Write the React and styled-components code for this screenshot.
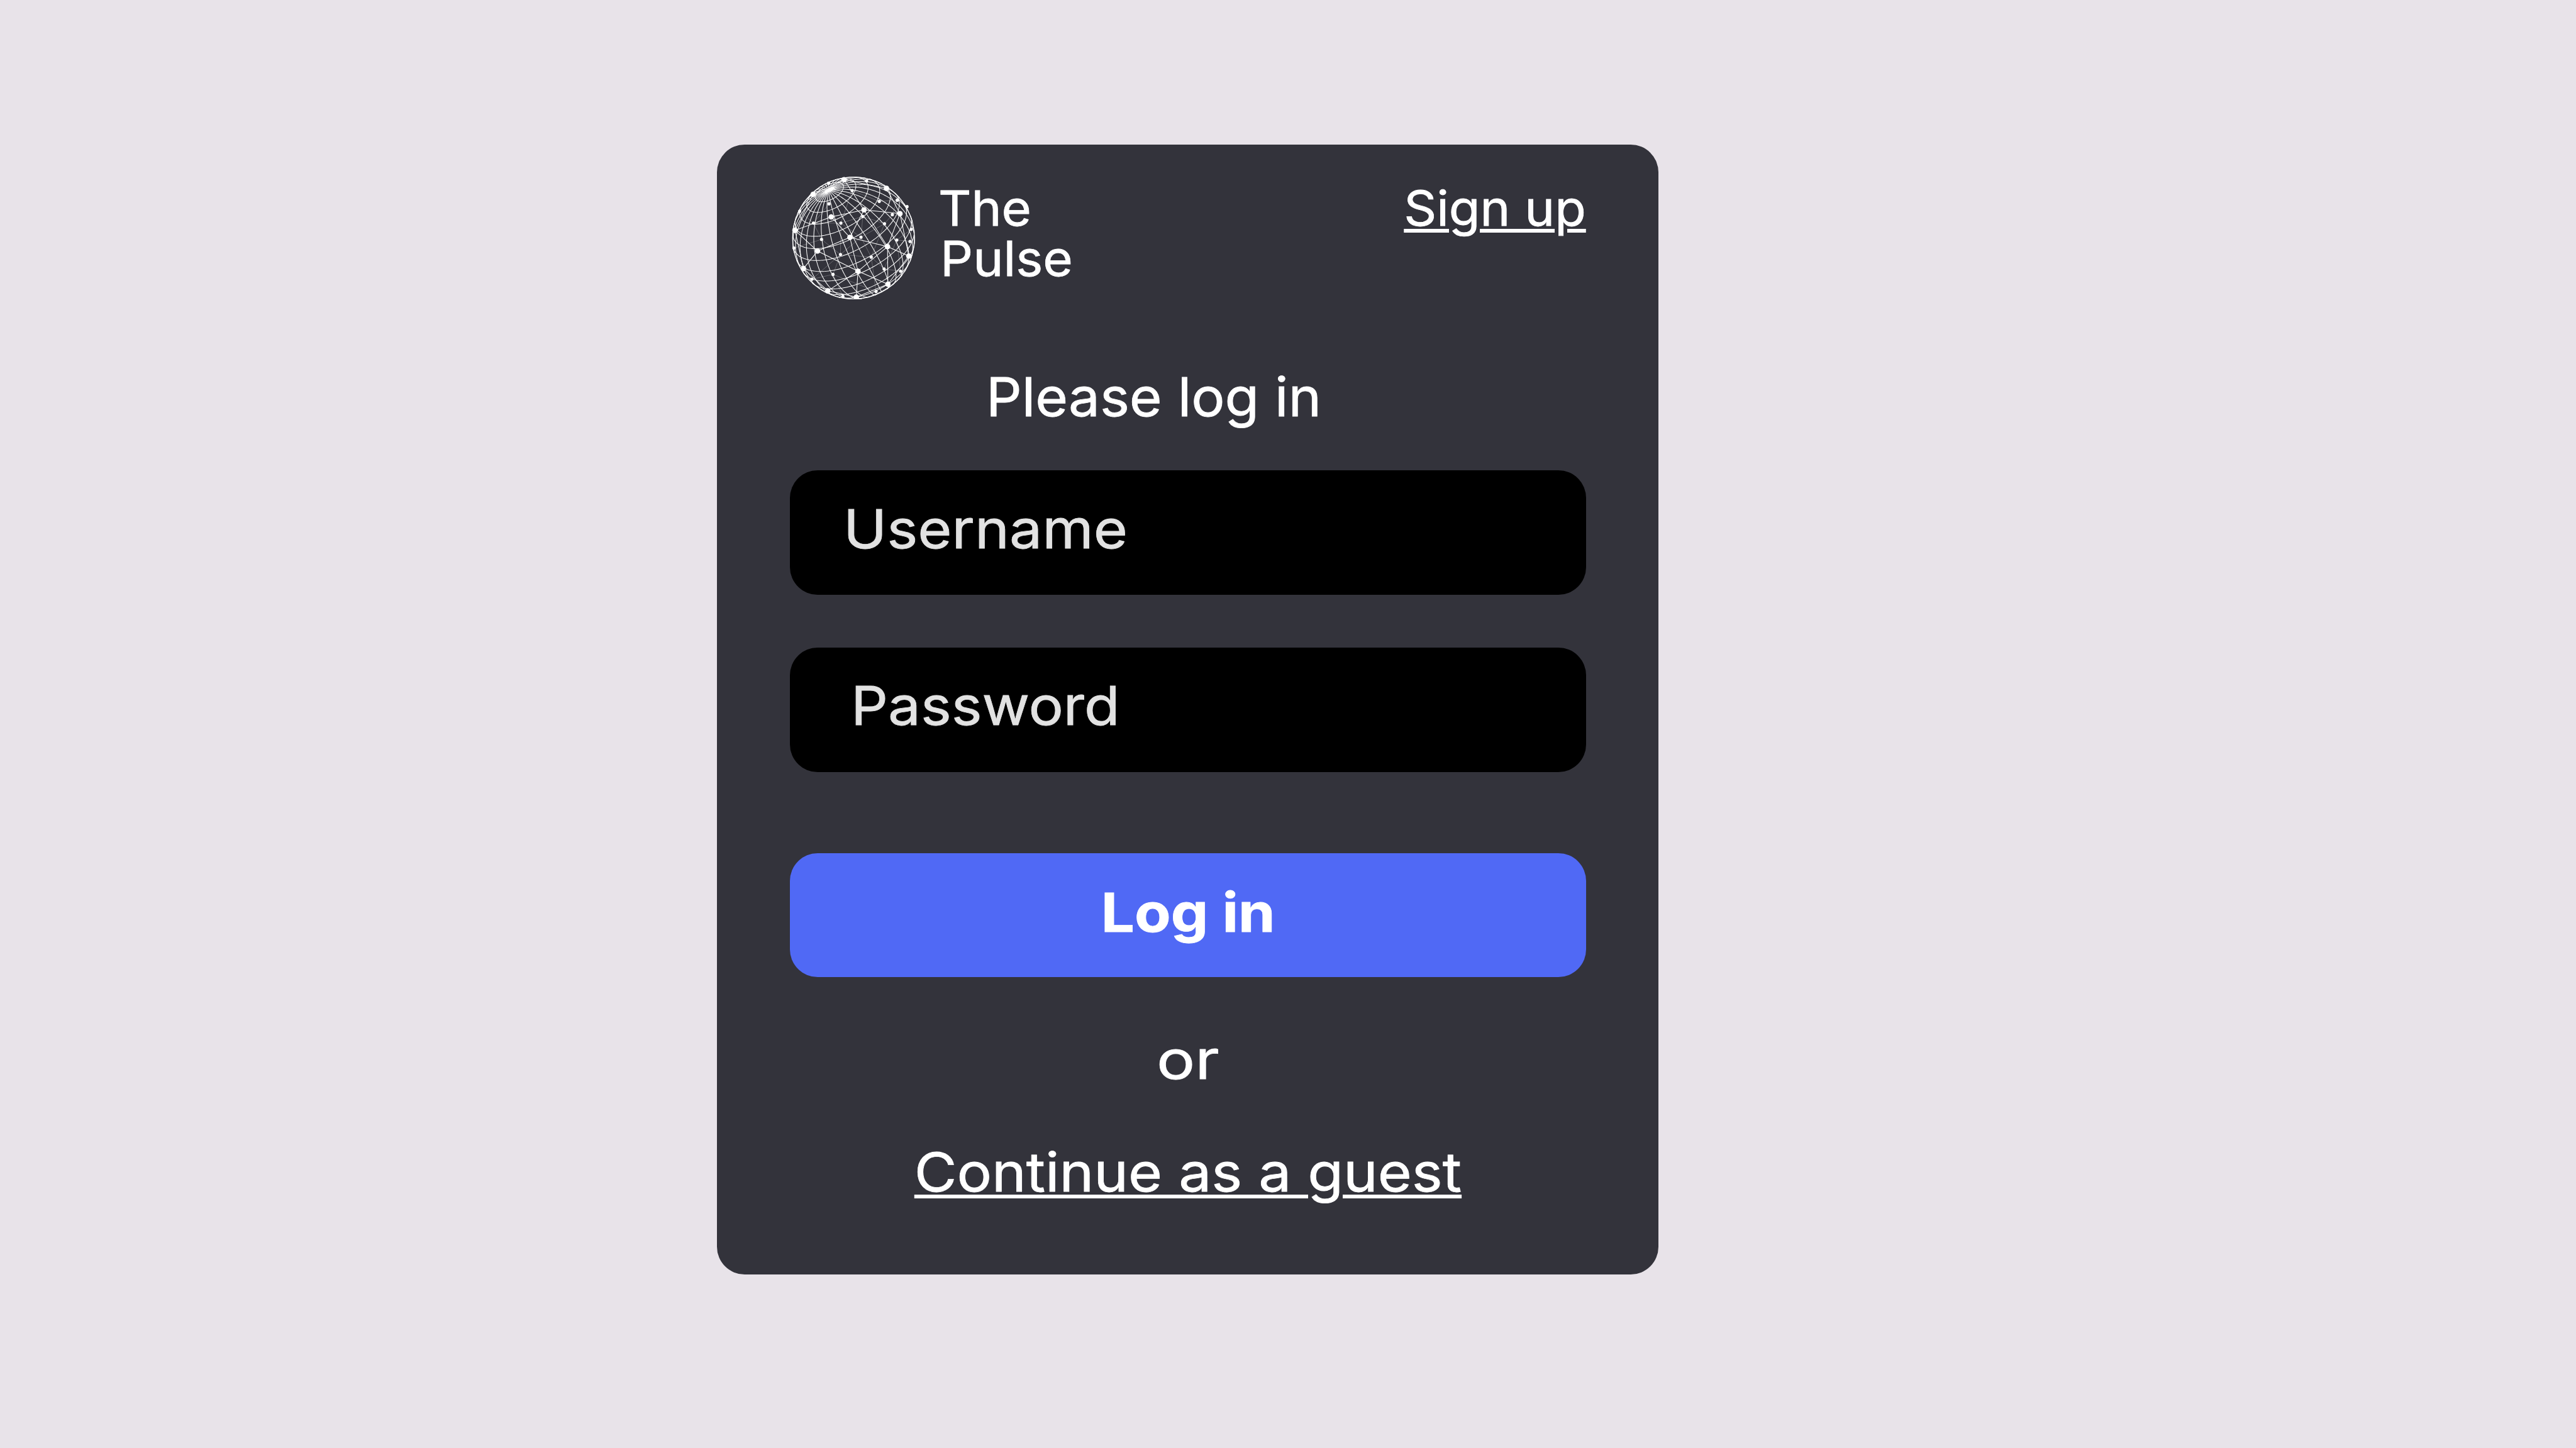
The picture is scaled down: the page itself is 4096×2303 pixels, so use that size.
import React from 'react';
import styled, { createGlobalStyle } from 'styled-components';

const GlobalStyle = createGlobalStyle`
  * { box-sizing: border-box; }
  body { margin: 0; background: #e8e3e9; }
`;

const Page = styled.main`
  display: flex;
  align-items: flex-start;
  width: 4096px;
  height: 2303px;
  padding: 230.3px 0 0 1139.9px;
  overflow: hidden;
  background: #e8e3e9;
  color: #ffffff;
  font-family: Inter, 'Liberation Sans', sans-serif;
`;

const Card = styled.section`
  display: flex;
  flex-direction: column;
  width: 1497.6px;
  height: 1796.6px;
  padding: 50.5px 115.9px 0;
  border-radius: 44px;
  background: #33333b;
`;

const Header = styled.header`
  display: flex;
  align-items: flex-start;
  height: 195.7px;
  padding-left: 3.7px;
`;

const Logo = styled.svg`
  flex: none;
  width: 195.7px;
  height: 195.7px;
`;

/* Text set slightly wider and heavier than the face's normal cut. */
const Wide = styled.span`
  display: inline-block;
  white-space: nowrap;
  -webkit-text-stroke: 0.8px currentColor;
  transform: scaleX(${(p) => p.$by});
  transform-origin: ${(p) => p.$from || 'left'} center;
`;

const BrandName = styled.div`
  display: flex;
  flex-direction: column;
  align-items: flex-start;
  margin: 9.9px auto 0 36.9px;
  font-size: 77.2px;
  line-height: 80.6px;
`;

const BrandLine = styled(Wide)`
  margin-left: ${(p) => p.$indent || 0}px;
`;

const Link = styled(Wide)`
  text-decoration: underline;
  text-decoration-thickness: 6px;
  text-underline-offset: 5px;
  font-size: ${(p) => p.$size}px;
  line-height: ${(p) => p.$line}px;
  margin-top: ${(p) => p.$top}px;
  align-self: ${(p) => (p.$from === 'center' ? 'center' : 'flex-start')};
`;

const Title = styled.h1`
  margin: 94.4px 0 57.5px;
  padding-left: 312px;
  font-size: 85.8px;
  line-height: 120px;
  font-weight: 400;
`;

const Field = styled.div`
  display: flex;
  align-items: center;
  height: 197.7px;
  margin-bottom: ${(p) => p.$gap}px;
  padding: 0 0 12.8px ${(p) => p.$indent}px;
  border-radius: 44px;
  background: #000000;
  color: #e2e2e2;
  font-size: 85.8px;
  line-height: 120px;
`;

const Button = styled.button`
  height: 197.7px;
  padding: 0 0 9.3px;
  border: 0;
  border-radius: 44px;
  background: #5069f5;
  color: #ffffff;
  font-family: inherit;
  font-size: 85.8px;
  font-weight: 700;
  line-height: 120px;
`;

const Divider = styled.div`
  margin-top: 70.9px;
  font-size: 85.8px;
  line-height: 120px;
  text-align: center;
`;

const hubs = [
  [328, 83], [174, 156], [539, 126], [264, 268], [427, 233], [606, 252], [84, 335], [357, 370],
  [196, 438], [544, 416], [650, 463], [126, 525], [397, 538], [247, 636], [389, 667], [546, 603],
];
const dots = [
  [251, 100], [440, 89], [368, 137], [253, 203], [503, 191], [592, 185], [641, 217], [107, 240],
  [568, 257], [421, 266], [176, 299], [312, 299], [529, 302], [662, 330], [216, 380], [412, 369],
  [590, 383], [656, 390], [79, 423], [310, 455], [463, 468], [527, 527], [609, 538], [168, 578],
  [273, 554], [322, 663], [487, 639],
];
const hubLinks = [
  [0, 4], [3, 7], [3, 4], [4, 5], [4, 9], [7, 9], [7, 8], [8, 11], [8, 12], [8, 6], [12, 9],
  [12, 13], [12, 14], [12, 15], [15, 9], [15, 14], [5, 2], [5, 10], [5, 9], [9, 10], [6, 1],
  [6, 3], [11, 13], [13, 14], [6, 11], [10, 15], [4, 7], [0, 2], [0, 1], [7, 12],
];
const dotLinks = [
  [0, 3], [1, 2], [2, 4], [4, 5], [5, 6], [3, 10], [10, 7], [10, 11], [11, 9], [9, 12], [12, 8],
  [8, 5], [11, 15], [10, 14], [14, 18], [14, 19], [11, 19], [15, 19], [15, 9], [15, 12], [12, 16],
  [16, 17], [13, 17], [12, 20], [20, 21], [20, 19], [19, 24], [24, 23], [19, 23], [20, 26],
  [21, 22], [21, 16], [24, 25], [24, 26], [23, 18], [16, 13], [2, 11], [15, 20], [16, 22],
];

const CX = 375;
const CY = 373;
const R = 304;
const norm = (v) => { const l = Math.hypot(...v); return v.map((n) => n / l); };
const cross = (a, b) => [a[1] * b[2] - a[2] * b[1], a[2] * b[0] - a[0] * b[2], a[0] * b[1] - a[1] * b[0]];
const pole = norm([-0.405, -0.776, 0.484]);
const side = norm(cross(pole, [0, 0, 1]));
const front = cross(side, pole);
const rad = Math.PI / 180;

// Point on the sphere for an angle from the pole and an azimuth, both in degrees.
const onSphere = (lat, lon) => {
  const s = Math.sin(lat * rad);
  const c = Math.cos(lat * rad);
  return [0, 1, 2].map((i) => pole[i] * c + (front[i] * Math.cos(lon * rad) + side[i] * Math.sin(lon * rad)) * s);
};
const trace = (points) => {
  let d = '';
  let pen = false;
  points.forEach(([x, y, z]) => {
    if (z < 0) { pen = false; return; }
    d += `${pen ? 'L' : 'M'}${(CX + x * R).toFixed(1)} ${(CY + y * R).toFixed(1)}`;
    pen = true;
  });
  return d;
};
const steps = (from, to, by) => Array.from({ length: Math.floor((to - from) / by) + 1 }, (_, i) => from + i * by);
const parallels = steps(14.5, 160, 11.6).map((lat) => trace(steps(0, 360, 2).map((lon) => onSphere(lat, lon))));
const meridians = steps(0, 348, 12).map((lon) => trace(steps(3, 176, 1.5).map((lat) => onSphere(lat, lon))));

function Globe() {
  return (
    <Logo viewBox="68 68 612 612" fill="none" stroke="#fff">
      <circle cx={CX} cy={CY} r={R - 1} strokeWidth="4" />
      <g strokeWidth="3.2">
        {[...parallels, ...meridians].map((d, i) => <path key={i} d={d} />)}
      </g>
      <g strokeWidth="3.2">
        {hubLinks.map(([a, b], i) => <path key={i} d={`M${hubs[a]}L${hubs[b]}`} />)}
      </g>
      <g strokeWidth="2" opacity="0.4">
        {dotLinks.map(([a, b], i) => <path key={i} d={`M${dots[a]}L${dots[b]}`} />)}
      </g>
      <g fill="#fff" stroke="none">
        <ellipse cx="255" cy="134" rx="27" ry="10" transform="rotate(-27 255 134)" />
        {hubs.map(([x, y]) => <circle key={`${x}-${y}`} cx={x} cy={y} r="13.5" />)}
        {dots.map(([x, y]) => <circle key={`${x}-${y}`} cx={x} cy={y} r="8" />)}
      </g>
    </Logo>
  );
}

export default function App() {
  return (
    <Page>
      <GlobalStyle />
      <Card>
        <Header>
          <Globe />
          <BrandName>
            <BrandLine $by={1.054}>The</BrandLine>
            <BrandLine $by={1.058} $indent={2.6}>Pulse</BrandLine>
          </BrandName>
          <Link as="a" $by={1.05} $from="right" $size={77.2} $line={80.6} $top={9.9}>Sign up</Link>
        </Header>
        <Title><Wide $by={1.036}>Please log in</Wide></Title>
        <Field $indent={85.5} $gap={83.9}><Wide $by={1.084}>Username</Wide></Field>
        <Field $indent={97.7} $gap={129.1}><Wide $by={1.077}>Password</Wide></Field>
        <Button><Wide $by={1.097} $from="center">Log in</Wide></Button>
        <Divider><Wide $by={1.19} $from="center">or</Wide></Divider>
        <Link as="a" $by={1.08} $from="center" $size={85.8} $line={120} $top={58.5}>Continue as a guest</Link>
      </Card>
    </Page>
  );
}
